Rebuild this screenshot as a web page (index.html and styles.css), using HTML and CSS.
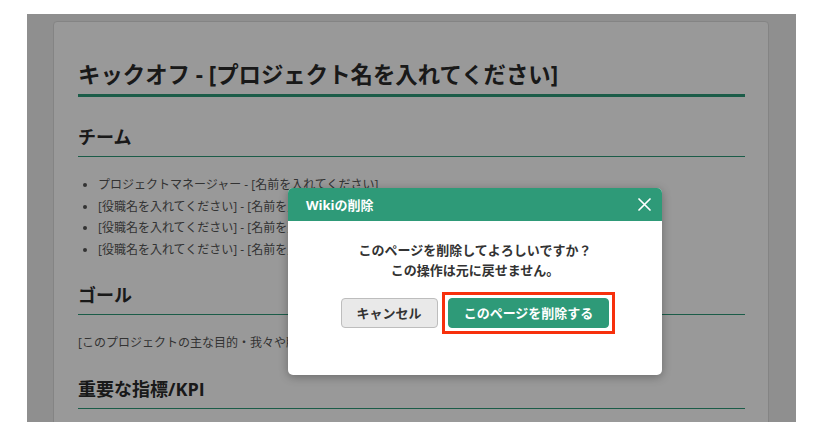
FILE: index.html
```html
<!DOCTYPE html>
<html lang="ja">
<head>
<meta charset="utf-8">
<title>Wikiの削除</title>
<link rel="stylesheet" href="styles.css">
</head>
<body>
<div class="frame">
  <div class="card">
    <h1 class="title">キックオフ - [プロジェクト名を入れてください]</h1>
    <h2 class="section">チーム</h2>
    <ul class="list">
      <li>プロジェクトマネージャー - [名前を入れてください]</li>
      <li>[役職名を入れてください] - [名前を入れてください]</li>
      <li>[役職名を入れてください] - [名前を入れてください]</li>
      <li>[役職名を入れてください] - [名前を入れてください]</li>
    </ul>
    <h2 class="section">ゴール</h2>
    <p class="para">[このプロジェクトの主な目的・我々や顧客にとってどんな意味があるのかを記載してください]</p>
    <h2 class="section">重要な指標/KPI</h2>
  </div>
  <div class="overlay"></div>
  <div class="modal">
    <div class="modal-header">
      <span class="modal-title">Wikiの削除</span>
      <span class="modal-close">
        <svg width="13" height="13" viewBox="0 0 13 13"><path d="M1 1 L12 12 M12 1 L1 12" stroke="#fff" stroke-width="1.7" stroke-linecap="round" fill="none"/></svg>
      </span>
    </div>
    <div class="modal-body">
      <p class="modal-text">このページを削除してよろしいですか？<br>この操作は元に戻せません。</p>
      <div class="modal-actions">
        <button class="btn btn-cancel">キャンセル</button>
        <button class="btn btn-delete">このページを削除する</button>
      </div>
    </div>
  </div>
</div>
</body>
</html>
```
FILE: styles.css
```css
* { box-sizing: border-box; }
html, body { margin: 0; padding: 0; background: #fff; }
body {
  font-family: "Open Sans", "Noto Sans CJK JP", sans-serif;
  color: #333;
}
.frame {
  position: relative;
  margin: 14px 26px 14px 27px;
  height: 408px;
  background: #eeeeee;
  overflow: hidden;
  padding: 7px 27px 0 26px;
}
.card {
  background: #fff;
  border: 1px solid #dcdcdc;
  border-radius: 4px;
  padding: 36px 23px 40px 24px;
}
.title {
  margin: 0 0 27px;
  font-size: 22.4px;
  line-height: 33px;
  font-weight: 700;
  color: #2b2b2b;
  padding-bottom: 3px;
  border-bottom: 3px solid #2e9a78;
  white-space: nowrap;
}
.section {
  margin: 22px 0 17px;
  font-size: 18px;
  line-height: 27px;
  font-weight: 700;
  color: #2b2b2b;
  padding-bottom: 5px;
  border-bottom: 1px solid #2e9a78;
}
.list {
  margin: 0;
  padding-left: 20px;
  font-size: 12px;
  line-height: 21.6px;
  color: #555;
}
.para {
  margin: 0;
  font-size: 12px;
  line-height: 21.6px;
  color: #555;
  white-space: nowrap;
}
.overlay {
  position: absolute;
  inset: 0;
  background: rgba(0, 0, 0, 0.4);
}
.modal {
  position: absolute;
  left: 261px;
  top: 174px;
  width: 374px;
  background: #fff;
  border-radius: 5px;
  box-shadow: 0 2px 10px rgba(0, 0, 0, 0.3);
}
.modal-header {
  height: 33px;
  background: #2e9a78;
  border-radius: 5px 5px 0 0;
  display: flex;
  align-items: center;
  justify-content: space-between;
  padding: 0 11px 0 18px;
}
.modal-title {
  color: #fff;
  font-size: 13px;
  font-weight: 700;
}
.modal-close {
  display: flex;
  width: 13px;
  height: 13px;
}
.modal-body {
  padding: 19px 0 47px;
  text-align: center;
}
.modal-text {
  margin: 0;
  font-size: 13px;
  line-height: 20px;
  font-weight: 700;
  color: #333;
}
.modal-actions {
  margin-top: 18px;
  display: flex;
  justify-content: center;
  gap: 10px;
}
.btn {
  height: 30px;
  padding: 0 15px;
  font-family: inherit;
  font-size: 13px;
  font-weight: 700;
  border-radius: 4px;
  border: 1px solid;
  line-height: 28px;
}
.btn-cancel {
  background: #e9e9e9;
  border-color: #bdbdbd;
  color: #333;
}
.btn-delete {
  position: relative;
  background: #2e9a78;
  border-color: #2e9a78;
  color: #fff;
}
.btn-delete::after {
  content: "";
  position: absolute;
  inset: -7px;
  border: 3px solid #f7300c;
  pointer-events: none;
}
```
